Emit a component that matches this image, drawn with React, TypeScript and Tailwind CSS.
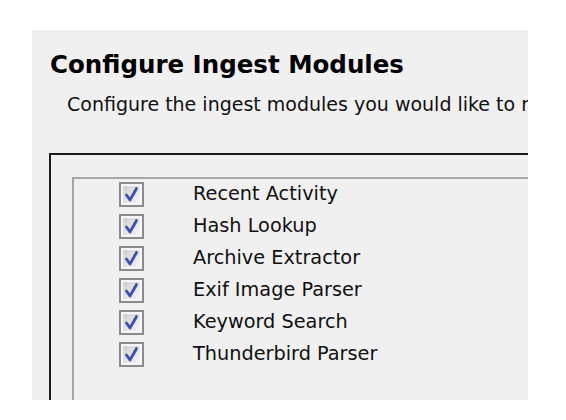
const MODULES = [
  "Recent Activity",
  "Hash Lookup",
  "Archive Extractor",
  "Exif Image Parser",
  "Keyword Search",
  "Thunderbird Parser",
];

function CheckBox() {
  return (
    <svg width="25" height="25" viewBox="0 0 25 25" className="shrink-0">
      <defs>
        <linearGradient id="cbfill" x1="0" y1="0" x2="1" y2="1">
          <stop offset="0" stopColor="#d0d0d0" />
          <stop offset="1" stopColor="#f6f6f6" />
        </linearGradient>
      </defs>
      <rect x="1" y="1" width="23" height="23" fill="#f4f4f4" stroke="#8c8c8c" strokeWidth="2" />
      <rect x="3.5" y="3.5" width="18" height="18" fill="url(#cbfill)" stroke="#f8f8f8" strokeWidth="1" />
      <path d="M7.5 13 L11 18 L17.5 6.5" fill="none" stroke="#3b55a6" strokeWidth="2.8" strokeLinecap="round" strokeLinejoin="round" />
    </svg>
  );
}

export default function App() {
  return (
    <div className="w-[566px] h-[420px] bg-white pt-[30px] pl-[32px]" style={{ fontFamily: '"DejaVu Sans", Verdana, sans-serif' }}>
      <div className="w-[496px] h-[370px] bg-[#f0f0f0] overflow-hidden">
        <h1 className="pt-[20px] pl-[18px] text-[24.5px] leading-[30px] font-bold text-black whitespace-nowrap">
          Configure Ingest Modules
        </h1>
        <p className="pt-[12px] pl-[35px] text-[19px] leading-[24px] text-[#111] whitespace-nowrap">
          Configure the ingest modules you would like to run.
        </p>
        <div className="mt-[37px] ml-[17px] w-[600px] h-[300px] border-t-2 border-l-2 border-[#1c1c1c]">
          <div className="mt-[22px] ml-[21px] h-[300px] border-t-2 border-l-2 border-[#a6a6a6]">
            <ul className="flex flex-col">
              {MODULES.map((name) => (
                <li key={name} className="h-[32px] flex items-start pl-[45px]">
                  <div className="mt-[3px]">
                    <CheckBox />
                  </div>
                  <span className="ml-[49px] mt-[2px] text-[19.3px] leading-[26px] text-[#111] whitespace-nowrap">{name}</span>
                </li>
              ))}
            </ul>
          </div>
        </div>
      </div>
    </div>
  );
}
